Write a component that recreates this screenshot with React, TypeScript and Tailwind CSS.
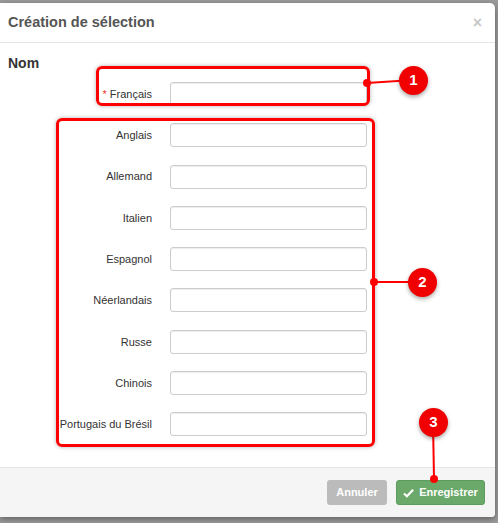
import React from 'react';

const languages = ['Anglais', 'Allemand', 'Italien', 'Espagnol', 'Néerlandais', 'Russe', 'Chinois', 'Portugais du Brésil'];

function Row({ label, required }: { label: string; required?: boolean }) {
  return (
    <div className="flex items-center h-[24px]">
      <label className="w-[144px] text-right text-[11px] text-[#333] pr-0">
        {required && <span className="text-[#e33]">* </span>}
        {label}
      </label>
      <input className="ml-[18px] w-[197px] h-[24px] border border-[#ccc] rounded-[3px] bg-white outline-none shadow-[inset_0_1px_1px_rgba(0,0,0,0.075)]" />
    </div>
  );
}

function Badge({ n, className }: { n: number; className: string }) {
  return (
    <div
      className={`absolute w-[29px] h-[29px] rounded-full bg-[#f00000] text-white font-bold text-[15px] flex items-center justify-center shadow-[0_2px_4px_rgba(0,0,0,0.35)] ${className}`}
    >
      {n}
    </div>
  );
}

export default function App() {
  return (
    <div
      className="relative w-[498px] h-[523px] bg-[#9b9b9b] pt-[3px] pr-[3px] overflow-hidden"
      style={{ fontFamily: '"Liberation Sans", Arial, sans-serif' }}
    >
      <div className="w-[495px] h-[514px] bg-white rounded-tr-[5px] rounded-br-[4px] flex flex-col shadow-[0_2px_6px_rgba(0,0,0,0.4)]">
        {/* header */}
        <div className="h-[40px] border-b border-[#e5e5e5] flex items-center justify-between px-2">
          <h1 className="text-[14.5px] font-bold text-[#555]">Création de sélection</h1>
          <span className="text-[#c8c8c8] text-[16px] font-bold mr-[5px] leading-none">×</span>
        </div>

        {/* body */}
        <div className="flex-1 px-2 pt-[12px]">
          <div className="text-[14px] font-bold text-[#333] leading-[16px]">Nom</div>
          <div className="mt-[11px] flex flex-col gap-[17.3px]">
            <Row label="Français" required />
            {languages.map((l) => (
              <Row key={l} label={l} />
            ))}
          </div>
        </div>

        {/* footer */}
        <div className="h-[50px] border-t border-[#e5e5e5] bg-[#f5f5f5] rounded-br-[4px] flex items-center justify-end gap-[9px] pr-[10px]">
          <button className="h-[25px] w-[60px] rounded-[3px] bg-[#bbbbbb] text-white text-[11px] font-bold">Annuler</button>
          <button className="h-[25px] w-[89px] rounded-[3px] bg-[#6aa96a] border border-[#5c9c5c] text-white text-[11px] font-bold flex items-center justify-center gap-[5px]">
            <svg width="11" height="10" viewBox="0 0 12 10">
              <path d="M1 5.5 L4.3 8.5 L11 1.5" stroke="white" strokeWidth="2.4" fill="none" />
            </svg>
            Enregistrer
          </button>
        </div>
      </div>

      {/* annotations */}
      <div className="absolute left-[96px] top-[66px] w-[274px] h-[40px] border-[3px] border-[#f00] rounded-[6px] shadow-[0_0_4px_rgba(0,0,0,0.3)]" />
      <div className="absolute left-[56px] top-[118px] w-[319px] h-[329px] border-[3px] border-[#f00] rounded-[6px] shadow-[0_0_4px_rgba(0,0,0,0.3)]" />
      <svg className="absolute left-0 top-0" width="498" height="523">
        <line x1="367" y1="83" x2="413" y2="80" stroke="#f00" strokeWidth="2" />
        <circle cx="367" cy="83" r="4" fill="#f00" />
        <line x1="374" y1="282" x2="422" y2="282" stroke="#f00" strokeWidth="2" />
        <circle cx="374" cy="282" r="4" fill="#f00" />
        <line x1="433" y1="422" x2="434" y2="479" stroke="#f00" strokeWidth="2" />
        <circle cx="434" cy="479" r="4" fill="#f00" />
      </svg>
      <Badge n={1} className="left-[399px] top-[66px]" />
      <Badge n={2} className="left-[408px] top-[268px]" />
      <Badge n={3} className="left-[419px] top-[408px]" />
    </div>
  );
}
